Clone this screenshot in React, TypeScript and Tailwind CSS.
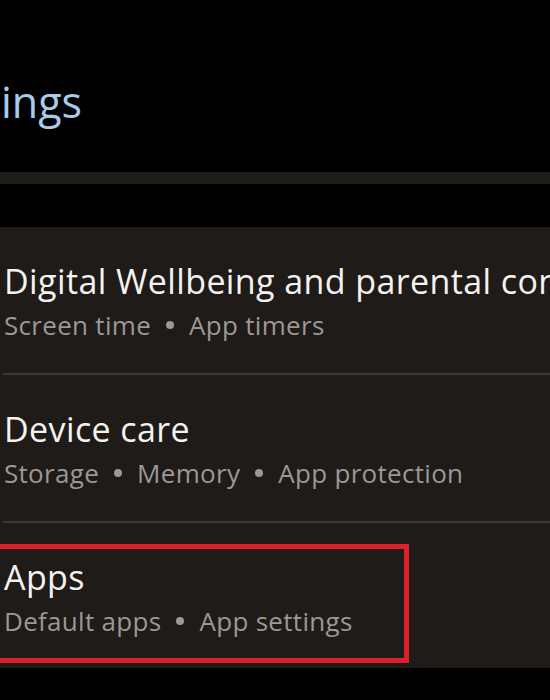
import React from 'react';

interface Row {
    title: string;
    parts: string[];
    highlight?: boolean;
}

const rows: Row[] = [
    { title: 'Digital Wellbeing and parental controls', parts: ['Screen time', 'App timers'] },
    { title: 'Device care', parts: ['Storage', 'Memory', 'App protection'] },
    { title: 'Apps', parts: ['Default apps', 'App settings'], highlight: true },
];

const SettingsRow: React.FC<{ row: Row; last: boolean }> = ({ row, last }) => (
    <div className={`relative ${last ? 'h-[145px]' : 'h-[148px]'} flex flex-col`}>
        <div className="pt-[33px] pl-[4px] whitespace-nowrap overflow-hidden">
            <div className="text-[34px] leading-[42px] tracking-[0.4px] text-[#f4f3f1]">{row.title}</div>
            <div className="text-[26px] leading-[34px] tracking-[0.3px] text-[#9b9895] mt-[6px] flex items-center">
                {row.parts.map((p, i) => (
                    <React.Fragment key={p}>
                        {i > 0 && <span className="mx-[15px] w-[8px] h-[8px] rounded-full bg-[#9b9895] inline-block" />}
                        <span>{p}</span>
                    </React.Fragment>
                ))}
            </div>
        </div>
        {!last && <div className="mt-auto ml-[3px] h-[2px] bg-[#3b3936]" />}
        {row.highlight && (
            <div className="absolute left-[-10px] top-[21px] w-[419px] h-[119px] border-[5px] border-[#e01f2b]" />
        )}
    </div>
);

export default function App() {
    return (
        <div className="w-[550px] h-[700px] bg-black overflow-hidden font-['Open_Sans',sans-serif]">
            <div className="h-[172px] pt-[76px]">
                <div className="text-[43px] leading-[52px] text-[#a8cbe9] pl-[1px]">ings</div>
            </div>
            <div className="h-[12px] bg-[#1f1d1a]" />
            <div className="h-[43px]" />
            <div className="h-[441px] bg-[#1e1b18]">
                {rows.map((r, i) => (
                    <SettingsRow key={r.title} row={r} last={i === rows.length - 1} />
                ))}
            </div>
        </div>
    );
}
